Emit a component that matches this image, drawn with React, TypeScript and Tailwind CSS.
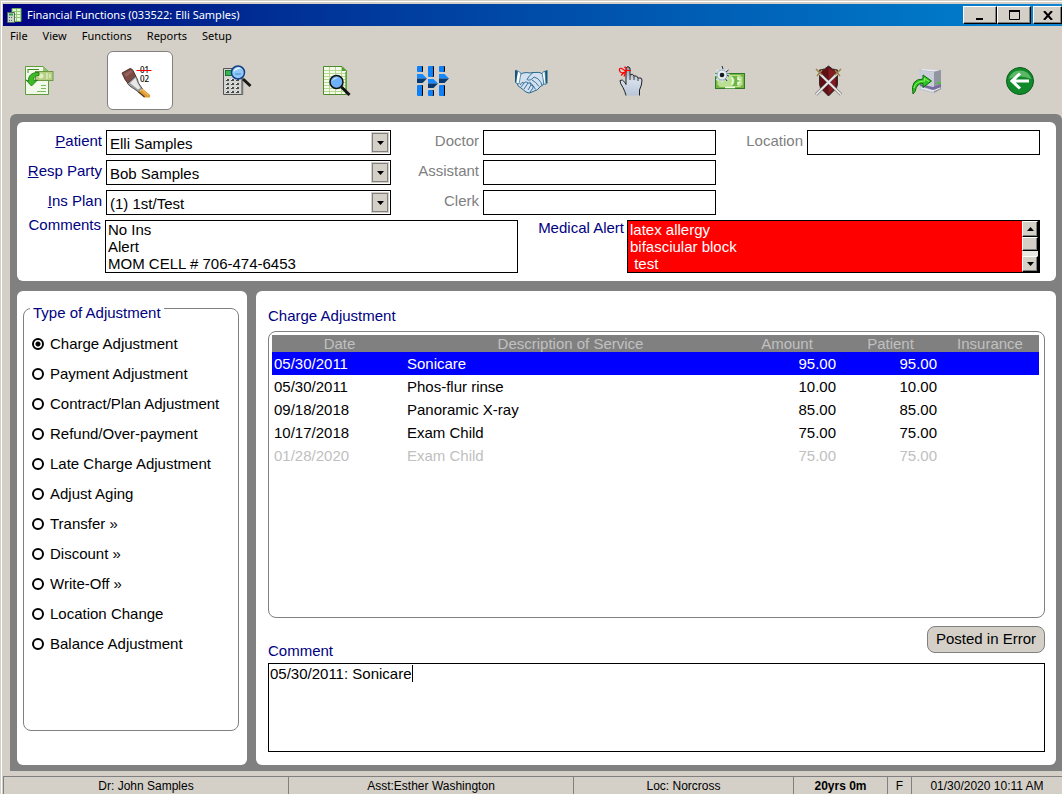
import React from "react";

const svgProps = {
  width: 36,
  height: 36,
  viewBox: "0 0 36 36",
  "aria-hidden": true,
  className: "overflow-visible",
} as const;

function PostIcon() {
  return (
    <svg {...svgProps}>
      <path d="M4.500 3.500H22l5.500 5V31.500H4.500Z" fill="#f1fae8" stroke="#5f9a3c" />
      <path d="M22 3.500V8.500H27.500Z" fill="#8fc06a" />
      <path d="M7 6.500h11M7 6v4" stroke="#3f8a2c" fill="none" />
      <path d="M20 22.500h5M20 25.500h5M16 28.500h9" stroke="#7cb860" />
      <rect x="14.500" y="8.500" width="17.500" height="9" fill="#b5cf85" stroke="#6c9846" />
      <circle cx="20" cy="13" r="2.500" fill="#e2efc0" />
      <path d="M26 10v6M29 11v4" stroke="#eef6d4" />
      <path d="M18 9.500c-8-.5-11 4-10.500 8.500L5 17l5.500 6 6-6-3.500.8C12.500 14 14 12.500 18 12.500Z" fill="#3dbb25" stroke="#18710f" strokeWidth=".8" />
    </svg>
  );
}

function BrushIcon() {
  return (
    <svg {...svgProps}>
      <path d="M0 10 8 5.500q2 0 3 2l3 6-8 7-3-4Z" fill="#7d4a44" stroke="#3a1c1a" strokeWidth=".8" />
      <path d="M2 11l7-4 1.500 2-6.500 5Z" fill="#95605a" />
      <path d="m5.500 20.500 8-7.500q2 2 3 7l4 6-4 3-5-3.500q-4-2-6-5Z" fill="#9a9a9a" stroke="#3b3b3b" strokeWidth=".8" />
      <path d="m8 20 5.500-5 2 5 3 5-2.500 1.500Z" fill="#e8e8e8" />
      <path d="m16.500 29 4-3.500L28 32v2.500h-5.500Z" fill="#dd9a35" />
      <path d="m18 28 2-1.500 6 6" stroke="#f8cd70" fill="none" />
      <path d="m16.500 29 6 5" stroke="#4a3215" strokeWidth="1.200" />
      <text x="18" y="10" fontFamily="Noto Sans, sans-serif" fontSize="8" fontWeight="500">01</text>
      <text x="18" y="19" fontFamily="Noto Sans, sans-serif" fontSize="8" fontWeight="500">02</text>
      <path d="M14.500 7.500h15" stroke="#f00" />
    </svg>
  );
}

function CalculatorIcon() {
  return (
    <svg {...svgProps}>
      <path d="M2.500 5.500h18.500v26H2.500Z" fill="#d3d5d2" stroke="#555" />
      <path d="M21.500 5v27" stroke="#777" strokeWidth="1.500" />
      <rect x="4.500" y="7.500" width="14" height="5" fill="#38b257" stroke="#197132" />
      {[16, 20, 24, 28].map((y) =>
        [5, 10, 15].map((x) => (
          <g key={`${x}-${y}`}>
            <rect x={x} y={y} width="3" height="2" fill="#4a4a4a" />
            <rect x={x} y={y} width="1" height="1" fill="#f5f5f5" />
          </g>
        )),
      )}
      <path d="m22 16 7.500 7" stroke="#181818" strokeWidth="3" />
      <circle cx="17" cy="9.500" r="6.500" fill="#8fc8f8" stroke="#123d86" strokeWidth="1.500" />
      <path d="M12.500 9a5 5 0 0 1 8-3.500Q16 5.500 12.500 9Z" fill="#e9f6ff" />
      <path d="M14 11h6" stroke="#4a8ad0" />
    </svg>
  );
}

function SheetSearchIcon() {
  return (
    <svg {...svgProps}>
      <path d="M4.500 3.500H23l4.500 4.500V31.500H4.500Z" fill="#f4fbe9" stroke="#4f8a2d" />
      <path d="M5 7.500h20M5 10.500h22M5 13.500h22M5 16.500h22M5 19.500h22M5 22.500h22M5 25.500h22M5 28.500h22M10.500 4v27M16.500 4v27M22.500 4v27" stroke="#b4d894" />
      <path d="M23 3.500V8h4.500Z" fill="#4f9d2a" />
      <path d="M27 9v22" stroke="#66ac3d" strokeWidth="1.500" />
      <path d="m22.500 24 8 8" stroke="#111" strokeWidth="3" />
      <circle cx="17.500" cy="19" r="6.500" fill="#6db1fa" stroke="#111" strokeWidth="1.500" />
      <path d="M13 18.500a5 5 0 0 1 7-3.500Q15.500 15 13 18.500Z" fill="#d8ecff" />
    </svg>
  );
}

function SlidersIcon() {
  const bars = [
    { x: 0, top: 6, knob: 11, low: 22 },
    { x: 11, top: 11, knob: 16, low: 27 },
    { x: 22, top: 6, knob: 11, low: 22 },
  ];
  return (
    <svg {...svgProps}>
      {bars.map(({ x, top, knob, low }) => (
        <g key={x}>
          <rect x={x + 1} y="3" width="5" height={top} rx="1" fill="#000" />
          <rect x={x} y="3" width="5" height={top} rx="1" fill="#0f80f5" />
          <rect x={x + 1} y={low} width="5" height={33 - low} rx="1" fill="#000" />
          <rect x={x} y={low} width="5" height={33 - low} rx="1" fill="#0f80f5" />
          <path d={`M${x} ${knob}h5.500l4.500 4.500H${x}Z`} fill="#168bff" />
          <path d={`M${x} ${knob + 4.5}h10l-4.500 4.500H${x}Z`} fill="#07386f" />
        </g>
      ))}
    </svg>
  );
}

function HandshakeIcon() {
  return (
    <svg {...svgProps}>
      <path d="m4 12 4-2q4-1 7 0l3-.5q7-1 10 1.500l1 9q0 2-3 3l-4 4q-3 1-5 2-3 2-6 0l-5-4q-4-2-4-5Z" fill="#d3e0f0" stroke="#28698f" />
      <path d="m1 7 5 3-2 11-3-1Z" fill="#fff" stroke="#1d6890" strokeWidth=".7" />
      <path d="m0 7 3 1.500-2 11H0ZM32.500 7l-4 1.500 1.500 12h2.500Z" fill="#13577f" />
      <path d="m30 8-3 2 2 11 2 .5Z" fill="#fff" stroke="#1d6890" strokeWidth=".7" />
      <path d="M18 9.500q-4 3-6 7 3 2 7-2.500 4 .5 7 5.500l1 3M17 17q4 2 7 6.500M14.500 19q4 3 6 7.500M5 22q2-4 4-2 2-2.500 4 0 3-1 3 2 3 0 2 3l-3 4M9 20l-3 4M13 20l-4 6M16 22l-3 5" fill="none" stroke="#28698f" strokeWidth=".9" />
    </svg>
  );
}

function ReminderIcon() {
  return (
    <svg {...svgProps}>
      <defs>
        <linearGradient id="glove" x2="0" y2="1">
          <stop stopColor="#8f939b" />
          <stop offset=".5" stopColor="#d6deea" />
          <stop offset="1" stopColor="#b9c5d8" />
        </linearGradient>
      </defs>
      <path d="M12 32.500q-1-4-3-8-3-4-3-7 2-2 5 2l1 2V5q2-3 4 0v7q3-2 4 1 3-1 4 2 4-1 4 2 0 5-2.500 10v5.500" fill="url(#glove)" stroke="#1f2328" />
      <path d="M16 12v5M20 13v4M24 15v3" stroke="#3a3f48" />
      <path d="M12 8.500q-7-6-6.500-1 1 4 6.500 1m0 0q1-6-2-4m-3 8q3-3 5-4l-2 5M11 7.500h6" fill="none" stroke="#f00" strokeWidth="1.200" />
    </svg>
  );
}

function MoneyGearIcon() {
  return (
    <svg {...svgProps}>
      <rect x="3.500" y="10.500" width="29" height="15" fill="#78b542" stroke="#2f7a29" />
      <path d="M5.500 13q2 0 2-1h21q0 2 2 2v8q-2 0-2 2h-21q0-2-2-2Z" fill="#b9df91" />
      <path d="M20 13q5 5 0 10h5q4-5 0-10Z" fill="#6ab544" />
      <path d="M19.500 14.500q3 3 0 7M26 14v2.500h2.500M26 22v-2.500h2.500M13 24.500h10" stroke="#f0fce0" strokeWidth="1.500" fill="none" />
      {[0, 45, 90, 135].map((a) => (
        <path key={a} d="M10 4.500v15" stroke="#d4e0e8" strokeWidth="2.500" transform={`rotate(${a} 10 12)`} />
      ))}
      <path d="m10 3 1 3M16.500 7 14 9M17 13l-3-1M15 18l-2-3" stroke="#222a31" />
      <circle cx="10" cy="12" r="5" fill="#e2edf4" stroke="#8296a8" strokeWidth=".7" />
      <circle cx="10" cy="12" r="2.300" fill="#151b20" />
    </svg>
  );
}

function ShieldIcon() {
  return (
    <svg {...svgProps}>
      <path d="m18.500 3-4 3-5 1v14q0 4 4 7l5 5 5-5q4-3 4-7V7l-5-1Z" fill="#5f1014" stroke="#352a2a" />
      <path d="M18.500 5v26q7-6 7-10V9Z" fill="#841b1f" />
      <path d="m9 10 22 21.500M28 10 6 31.500" stroke="#55504e" strokeWidth="3" />
      <path d="m9 10 22 21.500M28 10 6 31.500" stroke="#e6e6e8" strokeWidth="2" />
      <path d="m6 6 6 6M31 6l-6 6M7 13l5-6M30 13l-5-6" stroke="#96824a" strokeWidth="1.500" />
    </svg>
  );
}

function ExportIcon() {
  return (
    <svg {...svgProps}>
      <path d="m10 7 2-1 20 1v19l-8 4-14-4Z" fill="#a8acb5" />
      <path d="m10 7 15 2v21l-15-4Z" fill="#c9cdd8" />
      <path d="m25 9 7-2v19l-7 4Z" fill="#9196a0" />
      <path d="m11 7 2-1 18 1-6 1.500Z" fill="#ececf0" />
      <path d="m11 21 13 3 8-3v3l-8 3-13-4Z" fill="#776aa0" />
      <path d="m12 25 12 3 7-3" stroke="#f1f1f5" fill="none" />
      <path d="M28 20h4" stroke="#31d020" strokeWidth="1.500" />
      <path d="M4 31q-3-15 10-15v-4l8.500 6-8.500 6.500v-4q-6-1-8 8Z" fill="#2fc321" stroke="#0c6b0b" />
      <path d="M5 25q1-7 11-7l-1-3 5 3.500" stroke="#8bf560" fill="none" />
    </svg>
  );
}

function BackIcon() {
  return (
    <svg {...svgProps}>
      <circle cx="18" cy="18" r="13.500" fill="#118a2b" stroke="#0a5c1b" />
      <path d="M6.500 16a12 12 0 0 1 23 0q-11-5-23 0Z" fill="#5cb866" />
      <path d="M27 18H10m8-7.500L10 18l8 7.500" stroke="#fff" strokeWidth="3" fill="none" />
    </svg>
  );
}

function AppIcon() {
  return (
    <svg width="15" height="15" viewBox="0 0 15 15" aria-hidden="true">
      <path d="M5 .5h9v13H5Z" fill="#e4f5d4" stroke="#6fae53" />
      <path d="M6 3.500h8M6 6.500h8M6 9.500h8M9.500 1v12" stroke="#8fca76" />
      <path d="M.5 4.500h7v10h-7Z" fill="#c8d6cb" stroke="#536b5a" />
      <path d="M2 6.500h4" stroke="#2aa04a" strokeWidth="2" />
      <path d="M2 9.500h4M2 12.500h4" stroke="#5d6a61" strokeDasharray="1 1" />
    </svg>
  );
}

const tools = [
  { name: "Post transaction", Icon: PostIcon, box: "w-[72px]" },
  { name: "Adjustments", Icon: BrushIcon, box: "w-[66px] rounded-md border border-[#808080] bg-white" },
  { name: "Calculator", Icon: CalculatorIcon, box: "w-[66px]" },
  { name: "Ledger search", Icon: SheetSearchIcon, box: "w-[66px]" },
  { name: "Options", Icon: SlidersIcon, box: "w-[66px]" },
  { name: "Arrangements", Icon: HandshakeIcon, box: "w-[66px]" },
  { name: "Reminders", Icon: ReminderIcon, box: "w-[66px]" },
  { name: "Payment setup", Icon: MoneyGearIcon, box: "w-[66px]" },
  { name: "Insurance", Icon: ShieldIcon, box: "w-[66px]" },
  { name: "Export", Icon: ExportIcon, box: "w-[66px]" },
  { name: "Back", Icon: BackIcon, box: "w-[56px]" },
];

const adjustments = [
  "Charge Adjustment",
  "Payment Adjustment",
  "Contract/Plan Adjustment",
  "Refund/Over-payment",
  "Late Charge Adjustment",
  "Adjust Aging",
  "Transfer »",
  "Discount »",
  "Write-Off »",
  "Location Change",
  "Balance Adjustment",
];

const charges = [
  { date: "05/30/2011", service: "Sonicare", amount: "95.00", tone: "bg-[#0000ff] text-white" },
  { date: "05/30/2011", service: "Phos-flur rinse", amount: "10.00", tone: "text-black" },
  { date: "09/18/2018", service: "Panoramic X-ray", amount: "85.00", tone: "text-black" },
  { date: "10/17/2018", service: "Exam Child", amount: "75.00", tone: "text-black" },
  { date: "01/28/2020", service: "Exam Child", amount: "75.00", tone: "text-[#c0c0c0]" },
];

const bevel =
  "border border-t-white border-l-white border-r-black border-b-black bg-[#d4d0c8] shadow-[inset_-1px_-1px_0_#808080]";

function FieldLabel({ id, muted, children }: { id: string; muted?: boolean; children: React.ReactNode }) {
  return (
    <label htmlFor={id} className={`pr-1 text-right leading-[22px] whitespace-nowrap ${muted ? "text-[#808080]" : "text-[#000080]"}`}>
      {children}
    </label>
  );
}

function Dropdown({ id, value }: { id: string; value: string }) {
  return (
    <div className="relative h-[25px]">
      <select id={id} className="h-full w-full appearance-none rounded-none border border-black bg-white pt-[2px] pl-[3px] outline-none">
        <option>{value}</option>
      </select>
      <span className="pointer-events-none absolute top-[3px] right-[3px] bottom-[3px] flex w-4 items-center justify-center border border-[#808080] bg-[#d4d0c8] outline outline-[#d4d0c8]">
        <svg width="7" height="4" viewBox="0 0 7 4" aria-hidden="true">
          <path d="M0 0h7L3.500 4Z" />
        </svg>
      </span>
    </div>
  );
}

function TextField({ id }: { id: string }) {
  return <input id={id} type="text" className="h-[25px] w-full min-w-0 rounded-none border border-black bg-white px-1 outline-none" />;
}

function ScrollArrow({ up }: { up?: boolean }) {
  return (
    <button type="button" aria-label={up ? "Scroll up" : "Scroll down"} className={`flex h-4 w-full items-center justify-center ${bevel}`}>
      <svg width="7" height="4" viewBox="0 0 7 4" aria-hidden="true">
        <path d={up ? "M0 4h7L3.500 0Z" : "M0 0h7L3.500 4Z"} />
      </svg>
    </button>
  );
}

export default function App() {
  return (
    <div className="flex min-h-screen flex-col border-t border-l border-[#d4d0c8] bg-[#d4d0c8] font-['Liberation_Sans',Arial,sans-serif] text-[15px] text-black">
      <div className="flex flex-1 flex-col border-t border-l border-white pt-[2px] pl-px">
        <header>
          <div className="flex h-[22px] items-center bg-linear-to-r from-[#000080] to-[#1084d0] pl-1 text-white">
            <AppIcon />
            <h1 className="ml-[5px] flex-1 font-['Noto_Sans',sans-serif] text-[11px]">Financial Functions (033522: Elli Samples)</h1>
            <button type="button" aria-label="Minimize" className={`flex h-[18px] w-[34px] items-center justify-center ${bevel}`}>
              <svg width="8" height="10" viewBox="0 0 8 10" aria-hidden="true"><path d="M0 8h7v2H0Z" /></svg>
            </button>
            <button type="button" aria-label="Maximize" className={`flex h-[18px] w-[34px] items-center justify-center ${bevel}`}>
              <svg width="11" height="10" viewBox="0 0 11 10" aria-hidden="true"><path d="M.5 0v9.500h10V0" fill="none" stroke="#000" /><path d="M0 0h11v2H0Z" /></svg>
            </button>
            <button type="button" aria-label="Close" className={`ml-[2px] flex h-[18px] w-[29px] items-center justify-center ${bevel}`}>
              <svg width="10" height="9" viewBox="0 0 10 9" aria-hidden="true"><path d="m1 0 8 9M9 0 1 9" stroke="#000" strokeWidth="2" /></svg>
            </button>
          </div>
          <nav className="flex h-5 items-center gap-[15px] pl-[7px] font-['Noto_Sans',sans-serif] text-[11px]">
            {["File", "View", "Functions", "Reports", "Setup"].map((item) => (
              <button key={item} type="button">{item}</button>
            ))}
          </nav>
        </header>

        <div className="flex justify-between pt-[5px] pr-[14px] pb-1">
          {tools.map(({ name, Icon, box }) => (
            <button key={name} type="button" aria-label={name} className={`flex h-[59px] items-center justify-center ${box}`}>
              <Icon />
            </button>
          ))}
        </div>

        <main className="ml-[7px] flex flex-1 flex-col gap-[10px] rounded-t-md bg-[#808080] pt-2 pr-[6px] pb-[6px] pl-[7px]">
          <section className="rounded-md bg-white py-2 pr-[16px]">
            <div className="grid grid-cols-[89px_285fr_92px_233fr_91px_233fr] gap-y-[5px]">
              <FieldLabel id="patient"><u>P</u>atient</FieldLabel>
              <Dropdown id="patient" value="Elli Samples" />
              <FieldLabel id="doctor" muted>Doctor</FieldLabel>
              <TextField id="doctor" />
              <FieldLabel id="location" muted>Location</FieldLabel>
              <TextField id="location" />
              <FieldLabel id="resp"><u>R</u>esp Party</FieldLabel>
              <Dropdown id="resp" value="Bob Samples" />
              <FieldLabel id="assistant" muted>Assistant</FieldLabel>
              <TextField id="assistant" />
              <div className="col-span-2" />
              <FieldLabel id="plan"><u>I</u>ns Plan</FieldLabel>
              <Dropdown id="plan" value="(1) 1st/Test" />
              <FieldLabel id="clerk" muted>Clerk</FieldLabel>
              <TextField id="clerk" />
            </div>
            <div className="mt-[5px] grid grid-cols-[88px_413fr_109px_413fr]">
              <label htmlFor="comments" className="pr-1 text-right leading-[10px] text-[#000080]">Comments</label>
              <textarea
                id="comments"
                className="h-[53px] resize-none overflow-hidden rounded-none border border-black bg-white px-[2px] leading-[17px] outline-none"
                defaultValue={"No Ins\nAlert\nMOM CELL # 706-474-6453"}
              />
              <label htmlFor="alert" className="pr-[3px] text-right leading-4 whitespace-nowrap text-[#000080]">Medical Alert</label>
              <div className="flex h-[53px] border border-r-2 border-black bg-[#ff0000]">
                <textarea
                  id="alert"
                  className="h-full min-w-0 flex-1 resize-none overflow-hidden px-[2px] leading-[17px] text-white outline-none"
                  defaultValue={"latex allergy\nbifasciular block\n test"}
                />
                <div className="flex w-4 flex-col bg-[#eae8e4]">
                  <ScrollArrow up />
                  <div className={`h-[14px] ${bevel}`} />
                  <div className="flex-1" />
                  <ScrollArrow />
                </div>
              </div>
            </div>
          </section>

          <div className="flex flex-1 gap-[9px]">
            <section className="flex w-[230px] flex-col rounded-md bg-white pt-1 pr-2 pb-[34px] pl-[6px]">
              <fieldset className="min-w-0 flex-1 rounded-lg border border-[#808080] pl-2">
                <legend className="-ml-[2px] px-[3px] pt-[10px] leading-4 text-[#000080]">Type of Adjustment</legend>
                <div className="pt-2">
                  {adjustments.map((label, i) => (
                    <label key={label} className="flex h-[30px] items-center gap-[6px] whitespace-nowrap">
                      <input
                        type="radio"
                        name="adjustment"
                        defaultChecked={i === 0}
                        className="size-3 appearance-none rounded-full border-2 border-black bg-white checked:bg-[radial-gradient(circle,#000_2px,#fff_3px)]"
                      />
                      {label}
                    </label>
                  ))}
                </div>
              </fieldset>
            </section>

            <section className="flex min-w-0 flex-1 flex-col rounded-md bg-white pt-[15px] pr-[11px] pb-[13px] pl-3">
              <h2 className="mb-[5px] leading-5 text-[#000080]">Charge Adjustment</h2>
              <div className="flex-1 rounded-lg border border-[#808080] py-[3px] pr-[5px] pl-[3px]">
                <table className="w-full table-fixed border-collapse">
                  <thead>
                    <tr className="h-[17px] bg-[#808080] leading-[17px] text-[#c0c0c0]">
                      <th className="w-[135px] p-0 font-normal">Date</th>
                      <th className="p-0 font-normal">Description of Service</th>
                      <th className="w-[106px] p-0 font-normal">Amount</th>
                      <th className="w-[101px] p-0 font-normal">Patient</th>
                      <th className="w-[98px] p-0 font-normal">Insurance</th>
                    </tr>
                  </thead>
                  <tbody>
                    {charges.map(({ date, service, amount, tone }, i) => (
                      <tr key={i} className={`h-[23px] leading-[23px] ${tone}`}>
                        <td className="p-0 pl-[2px]">{date}</td>
                        <td className="p-0">{service}</td>
                        <td className="p-0 pr-1 text-right">{amount}</td>
                        <td className="p-0 pr-1 text-right">{amount}</td>
                        <td className="p-0" />
                      </tr>
                    ))}
                  </tbody>
                </table>
              </div>
              <div className="mt-2 flex h-[37px] items-start justify-between">
                <label htmlFor="comment" className="self-end pb-[2px] leading-5 text-[#000080]">Comment</label>
                <button type="button" className="h-[27px] w-[118px] rounded-lg border border-[#808080] bg-[#d4d0c8]">Posted in Error</button>
              </div>
              <div className="relative h-[89px]">
                <textarea
                  id="comment"
                  className="h-full w-full resize-none rounded-none border border-black bg-white px-px py-px leading-[17px] outline-none"
                  defaultValue="05/30/2011: Sonicare"
                />
                <span className="absolute top-[2px] left-[144px] h-[17px] w-px bg-black" />
              </div>
            </section>
          </div>
        </main>

        <footer className="mt-[5px] grid h-[18px] grid-cols-[285fr_285fr_220fr_94px_24px_151px] text-center text-[12px] leading-[18px] whitespace-nowrap [&>div]:border-t [&>div]:border-l [&>div]:border-[#808080]">
          <div>Dr: John Samples</div>
          <div>Asst:Esther Washington</div>
          <div>Loc: Norcross</div>
          <div className="font-bold">20yrs 0m</div>
          <div>F</div>
          <div>01/30/2020 10:11 AM</div>
        </footer>
      </div>
    </div>
  );
}
